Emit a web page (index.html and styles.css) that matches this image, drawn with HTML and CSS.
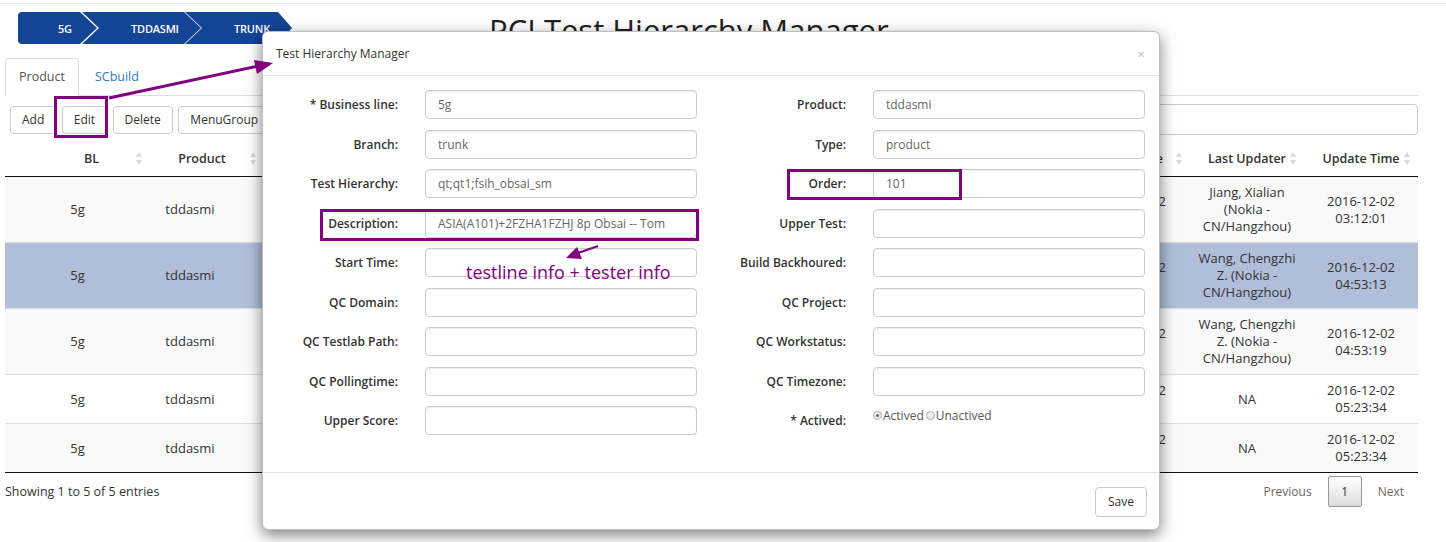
FILE: index.html
```html
<!DOCTYPE html>
<html lang="en">
<head>
<meta charset="utf-8">
<title>PCI Test Hierarchy Manager</title>
<link rel="stylesheet" href="styles.css">
</head>
<body>
<div class="topline"></div>
<div class="page">
  <header class="head">
    <nav class="crumbs">
      <span class="crumb c1">5G</span>
      <span class="crumb c2">TDDASMI</span>
      <span class="crumb c3">TRUNK</span>
    </nav>
    <h1 class="title">PCI Test Hierarchy Manager</h1>
  </header>

  <ul class="tabs">
    <li class="tab active">Product</li>
    <li class="tab"><a class="tab-link">SCbuild</a></li>
  </ul>

  <div class="toolbar">
    <button class="btn">Add</button>
    <button class="btn">Edit</button>
    <button class="btn">Delete</button>
    <button class="btn">MenuGroup</button>
    <input class="search" type="text">
  </div>

  <table class="grid">
    <colgroup>
      <col class="w-bl"><col class="w-prod"><col class="w-mid"><col class="w-ct"><col class="w-lu"><col class="w-ut">
    </colgroup>
    <thead>
      <tr>
        <th class="h-bl">BL<span class="sort"></span></th>
        <th class="h-prod">Product<span class="sort"></span></th>
        <th></th>
        <th class="h-ct">Create Time<span class="sort"></span></th>
        <th>Last Updater<span class="sort"></span></th>
        <th>Update Time<span class="sort"></span></th>
      </tr>
    </thead>
    <tbody>
      <tr class="odd">
        <td>5g</td><td class="d-prod">tddasmi</td><td></td>
        <td class="d-ct">2016-12-02 03:12:01</td><td class="d-lu">Jiang, Xialian (Nokia - CN/Hangzhou)</td><td class="d-ut">2016-12-02 03:12:01</td>
      </tr>
      <tr class="even selected">
        <td>5g</td><td class="d-prod">tddasmi</td><td></td>
        <td class="d-ct">2016-12-02 04:53:13</td><td class="d-lu">Wang, Chengzhi Z. (Nokia - CN/Hangzhou)</td><td class="d-ut">2016-12-02 04:53:13</td>
      </tr>
      <tr class="odd">
        <td>5g</td><td class="d-prod">tddasmi</td><td></td>
        <td class="d-ct">2016-12-02 04:53:19</td><td class="d-lu">Wang, Chengzhi Z. (Nokia - CN/Hangzhou)</td><td class="d-ut">2016-12-02 04:53:19</td>
      </tr>
      <tr class="even">
        <td>5g</td><td class="d-prod">tddasmi</td><td></td>
        <td class="d-ct">2016-12-02 05:23:34</td><td class="d-lu">NA</td><td class="d-ut">2016-12-02 05:23:34</td>
      </tr>
      <tr class="odd">
        <td>5g</td><td class="d-prod">tddasmi</td><td></td>
        <td class="d-ct">2016-12-02 05:23:34</td><td class="d-lu">NA</td><td class="d-ut">2016-12-02 05:23:34</td>
      </tr>
    </tbody>
  </table>

  <div class="tfoot">
    <div class="info">Showing 1 to 5 of 5 entries</div>
    <div class="pager">
      <span class="pg">Previous</span>
      <span class="pg current">1</span>
      <span class="pg">Next</span>
    </div>
  </div>
</div>

<div class="modal">
  <div class="modal-head">
    <span class="modal-title">Test Hierarchy Manager</span>
    <span class="close">×</span>
  </div>
  <div class="modal-body">
    <div class="col">
      <div class="row"><label class="lbl">* Business line:</label><div class="inp">5g</div></div>
      <div class="row"><label class="lbl">Branch:</label><div class="inp">trunk</div></div>
      <div class="row"><label class="lbl">Test Hierarchy:</label><div class="inp">qt;qt1;fsih_obsai_sm</div></div>
      <div class="row"><label class="lbl">Description:</label><div class="inp">ASIA(A101)+2FZHA1FZHJ 8p Obsai -- Tom</div></div>
      <div class="row"><label class="lbl">Start Time:</label><div class="inp"></div></div>
      <div class="row"><label class="lbl">QC Domain:</label><div class="inp"></div></div>
      <div class="row"><label class="lbl">QC Testlab Path:</label><div class="inp"></div></div>
      <div class="row"><label class="lbl">QC Pollingtime:</label><div class="inp"></div></div>
      <div class="row"><label class="lbl">Upper Score:</label><div class="inp"></div></div>
    </div>
    <div class="col">
      <div class="row"><label class="lbl">Product:</label><div class="inp">tddasmi</div></div>
      <div class="row"><label class="lbl">Type:</label><div class="inp">product</div></div>
      <div class="row"><label class="lbl">Order:</label><div class="inp">101</div></div>
      <div class="row"><label class="lbl">Upper Test:</label><div class="inp"></div></div>
      <div class="row"><label class="lbl">Build Backhoured:</label><div class="inp"></div></div>
      <div class="row"><label class="lbl">QC Project:</label><div class="inp"></div></div>
      <div class="row"><label class="lbl">QC Workstatus:</label><div class="inp"></div></div>
      <div class="row"><label class="lbl">QC Timezone:</label><div class="inp"></div></div>
      <div class="row"><label class="lbl">* Actived:</label>
        <div class="radios">
          <span class="radio on"></span><span class="rtext">Actived</span>
          <span class="radio"></span><span class="rtext">Unactived</span>
        </div>
      </div>
    </div>
  </div>
  <div class="modal-foot">
    <button class="btn save">Save</button>
  </div>
</div>

<svg class="marks" width="1446" height="542" viewBox="0 0 1446 542">
  <rect x="55.5" y="97.5" width="51" height="39" fill="none" stroke="#800080" stroke-width="3"/>
  <line x1="109" y1="98" x2="258" y2="66" stroke="#800080" stroke-width="3"/>
  <polygon points="273,63 254,60 257,74" fill="#800080"/>
  <rect x="321.5" y="210.5" width="376" height="29" fill="none" stroke="#800080" stroke-width="3"/>
  <rect x="788.5" y="170.5" width="172" height="28" fill="none" stroke="#800080" stroke-width="3"/>
  <line x1="598" y1="246" x2="578" y2="253" stroke="#800080" stroke-width="2"/>
  <polygon points="566,258 577,247 582,259" fill="#800080"/>
</svg>
<div class="note">testline info + tester info</div>
</body>
</html>
```

FILE: styles.css
```css
* { box-sizing: border-box; }
html, body { margin: 0; padding: 0; background: #fff; }
body {
  font-family: "Open Sans", "Noto Sans", sans-serif;
  font-size: 13px;
  color: #333;
  width: 1446px;
  height: 542px;
  overflow: hidden;
  position: relative;
}
.topline { height: 4px; border-bottom: 1px solid #e6e6e6; }
.page { padding: 0 28px 0 5px; }

/* header */
.head { display: flex; align-items: flex-start; margin-top: 8px; height: 32px; }
.crumbs { display: flex; margin-left: 13px; height: 32px; }
.crumb {
  display: flex; align-items: center; height: 32px;
  background: #134496; color: #fff;
  font-size: 11px; font-weight: 600; letter-spacing: -0.2px;
}
.c1 { width: 79px; padding-left: 40px; border-radius: 4px 0 0 4px;
  clip-path: polygon(0 0, calc(100% - 17px) 0, 100% 50%, calc(100% - 17px) 100%, 0 100%); }
.c2 { width: 119px; margin-left: -15px; padding-left: 49px;
  clip-path: polygon(0 0, calc(100% - 17px) 0, 100% 50%, calc(100% - 17px) 100%, 0 100%, 17px 50%); }
.c3 { width: 107px; margin-left: -16px; padding-left: 49px;
  clip-path: polygon(0 0, calc(100% - 14px) 0, 100% 50%, calc(100% - 14px) 100%, 0 100%, 17px 50%); }
.title {
  margin: 0 0 0 197px; font-size: 31px; font-weight: 400; line-height: 36px;
  color: #222; white-space: nowrap;
}

/* tabs */
.tabs { list-style: none; margin: 14px 0 0; padding: 0; display: flex; border-bottom: 1px solid #ddd; height: 38px; font-size: 12.5px; }
.tab { padding: 0 13px; line-height: 36px; height: 38px; margin-bottom: -1px; border: 1px solid transparent; border-radius: 4px 4px 0 0; }
.tab.active { border-color: #ddd; border-bottom-color: #fff; background: #fff; color: #555; }
.tab-link { color: #337ab7; padding-left: 2px; }

/* toolbar */
.toolbar { display: flex; align-items: center; gap: 5.5px; padding-left: 5px; margin-top: 8px; height: 31px; }
.btn {
  font-family: inherit; font-size: 12px; color: #333; background: #fff;
  border: 1px solid #ccc; border-radius: 4px; height: 28px; padding: 0 11px; line-height: 26px;
}
.search { margin-left: auto; width: 420px; height: 31px; border: 1px solid #ccc; border-radius: 4px; }

/* table */
.grid { width: 1413px; table-layout: fixed; border-collapse: collapse; margin-top: 5px; }
.w-bl { width: 145px; } .w-prod { width: 114px; } .w-mid { width: 816px; }
.w-ct { width: 110px; } .w-lu { width: 114px; } .w-ut { width: 114px; }
.grid th {
  position: relative; font-weight: 600; line-height: 17px; padding: 10px 10px 9px; text-align: center;
  border-bottom: 1px solid #111; white-space: nowrap; font-size: 12.5px;
}
.grid th.h-bl { padding-left: 38px; }
.grid th.h-prod { padding-left: 20px; padding-right: 30px; }
.grid th.h-ct { padding-right: 28px; }
.sort { position: absolute; right: 7px; top: 12px; width: 7px; height: 13px; }
.sort::before, .sort::after {
  content: ""; position: absolute; left: 0; width: 0; height: 0;
  border-left: 3.5px solid transparent; border-right: 3.5px solid transparent;
}
.sort::before { top: 0; border-bottom: 5px solid #dadada; }
.sort::after { bottom: 0; border-top: 5px solid #dadada; }
.grid td { padding: 7px 10px; line-height: 17px; text-align: center; vertical-align: middle; border-top: 1px solid #ddd; }
.grid tbody tr:first-child td { border-top: none; }
.grid tbody tr:last-child td { border-bottom: 1px solid #111; }
.grid td.d-prod { padding-right: 44px; }
.grid td.d-ct { padding-right: 16px; }
.grid td.d-lu { padding-left: 6px; padding-right: 6px; }
.odd { background: #f9f9f9; }
.even { background: #fff; }
.selected { background: #b0bed9; }

.tfoot { display: flex; justify-content: space-between; align-items: center; margin-top: 3px; height: 31px; font-size: 12.5px; }
.pager { display: flex; align-items: center; font-size: 12px; }
.pg { color: #666; padding: 0 16px; line-height: 29px; }
.pg.current {
  color: #333; border: 1px solid #979797; border-radius: 2px; height: 31px; width: 34px; padding: 0; text-align: center;
  background: linear-gradient(to bottom, #fff 0%, #dcdcdc 100%); line-height: 29px;
}
.pager .pg:last-child { padding-right: 14px; }

/* modal */
.modal {
  position: absolute; left: 262px; top: 31px; width: 898px; height: 499px;
  background: #fff; border: 1px solid rgba(0,0,0,.25); border-radius: 6px;
  box-shadow: 0 5px 15px rgba(0,0,0,.5);
  display: flex; flex-direction: column; font-size: 12px;
}
.modal-head { display: flex; justify-content: space-between; align-items: center; height: 44px; padding: 0 14px 0 13px; border-bottom: 1px solid #e5e5e5; }
.modal-title { color: #333; }
.close { color: #bbb; font-size: 13px; }
.modal-body { flex: 1; display: grid; grid-template-columns: 1fr 1fr; padding-top: 14px; }
.col { display: flex; flex-direction: column; gap: 10.5px; }
.row { display: flex; align-items: center; height: 29px; }
.lbl { width: 135px; flex: none; text-align: right; font-weight: 600; color: #333; margin-right: 27px; white-space: nowrap; }
.inp {
  width: 272px; flex: none; height: 29px; border: 1px solid #ccc; border-radius: 4px; padding: 0 12px; line-height: 27px;
  color: #666; box-shadow: inset 0 1px 1px rgba(0,0,0,.075); white-space: nowrap; overflow: hidden;
}
.radios { display: flex; align-items: center; align-self: flex-start; margin-top: 1px; color: #555; }
.radio { width: 9px; height: 9px; border: 1px solid #aaa; border-radius: 50%; background: #eee; margin-right: 1px; position: relative; }
.radio.on::after { content: ""; position: absolute; left: 2px; top: 2px; width: 3px; height: 3px; border-radius: 50%; background: #666; }
.rtext { margin-right: 2px; }
.modal-foot { height: 57px; border-top: 1px solid #e5e5e5; display: flex; justify-content: flex-end; align-items: center; padding: 1px 12px 0 0; }
.save { height: 30px; font-size: 12px; padding: 0 12px; }

/* annotations */
.marks { position: absolute; left: 0; top: 0; pointer-events: none; }
.note { position: absolute; left: 466px; top: 259px; font-size: 18px; line-height: 26px; color: #800080; white-space: nowrap; }
```
